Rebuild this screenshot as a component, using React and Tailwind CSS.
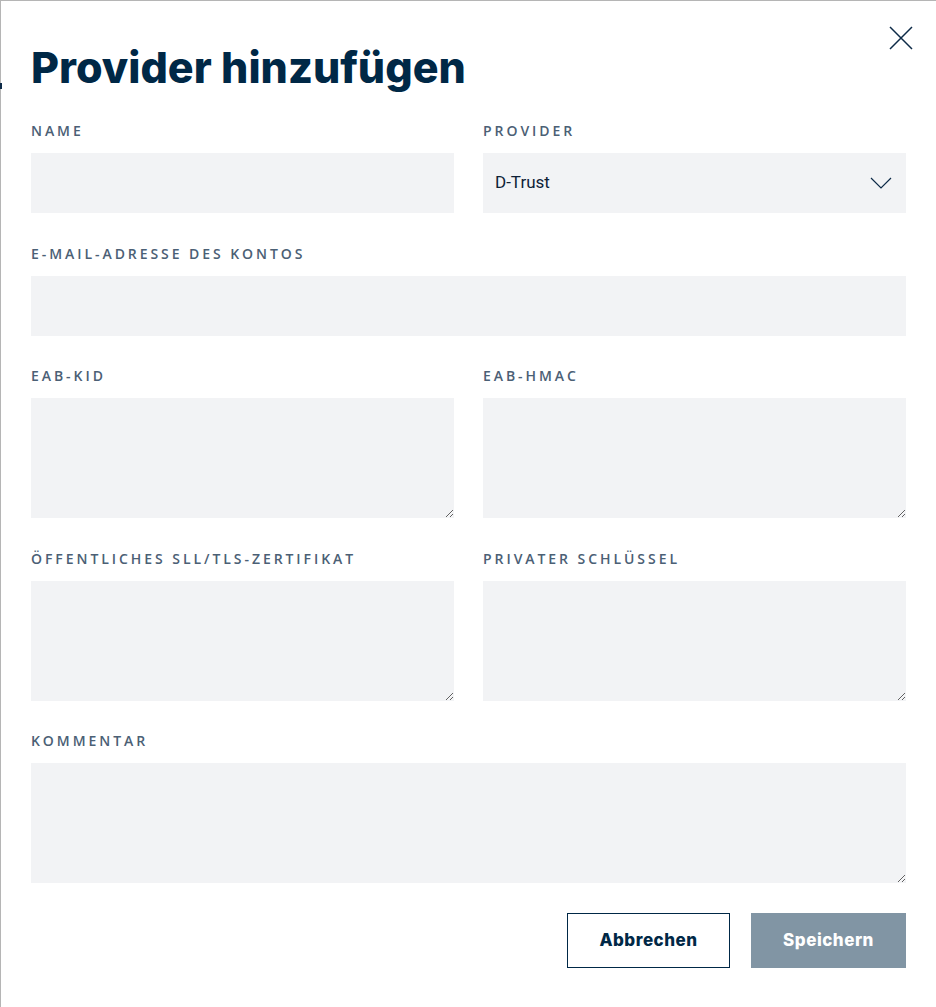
const label = "mb-[14px] block text-[14px] font-semibold uppercase leading-4 tracking-[0.21em] text-[#4b6075]";
const field = "w-full bg-[#f2f3f5] outline-none";

function Field({ title, children, className = "" }) {
  return (
    <div className={className}>
      <label className={label}>{title}</label>
      {children}
    </div>
  );
}

function Area() {
  return <textarea className={`${field} block h-[120px] resize-y`} />;
}

export default function App() {
  return (
    <div className="relative min-h-[1007px] border-l border-t border-[#b5b5b5] bg-white font-['Open_Sans',sans-serif]">
      <div className="absolute -left-px top-[82px] h-[6px] w-[2px] bg-[#0d2a47]" />
      <div className="relative px-[30px] pb-10 pt-[40px]">
        <button className="absolute right-[23px] top-[25px] text-[#0d2a47]">
          <svg width="24" height="24" viewBox="0 0 24 24" fill="none" stroke="currentColor" strokeWidth="1.5">
            <path d="M1 1L23 23M23 1L1 23" />
          </svg>
        </button>
        <h1 className="font-['Inter',sans-serif] text-[43px] font-extrabold leading-[52px] text-[#002846]">
          Provider hinzufügen
        </h1>

        <div className="mt-[30px] grid grid-cols-[423px_1fr] gap-x-[29px] gap-y-[32.5px]">
          <Field title="Name">
            <input className={`${field} h-[60px]`} />
          </Field>
          <Field title="Provider">
            <div className={`${field} flex h-[60px] items-center justify-between pl-3 pr-[14px] font-['Roboto',sans-serif] text-[17px] text-[#0d2137]`}>
              <span>D-Trust</span>
              <svg width="22" height="13" viewBox="0 0 22 13" fill="none" stroke="#0d2a47" strokeWidth="1.2">
                <path d="M1 1L11 11L21 1" />
              </svg>
            </div>
          </Field>
          <Field title="E-Mail-Adresse des Kontos" className="col-span-2">
            <input className={`${field} h-[60px]`} />
          </Field>
          <Field title="EAB-KID">
            <Area />
          </Field>
          <Field title="EAB-HMAC">
            <Area />
          </Field>
          <Field title="Öffentliches SLL/TLS-Zertifikat">
            <Area />
          </Field>
          <Field title="Privater Schlüssel">
            <Area />
          </Field>
          <Field title="Kommentar" className="col-span-2">
            <Area />
          </Field>
        </div>

        <div className="mt-[30px] flex justify-end gap-[21px]">
          <button className="h-[55px] w-[163px] border border-[#002846] font-['Inter',sans-serif] text-[17px] font-extrabold tracking-[0.03em] text-[#002846]">
            Abbrechen
          </button>
          <button className="h-[55px] w-[155px] bg-[#8195a4] font-['Inter',sans-serif] text-[17px] font-extrabold tracking-[0.03em] text-white">
            Speichern
          </button>
        </div>
      </div>
    </div>
  );
}
